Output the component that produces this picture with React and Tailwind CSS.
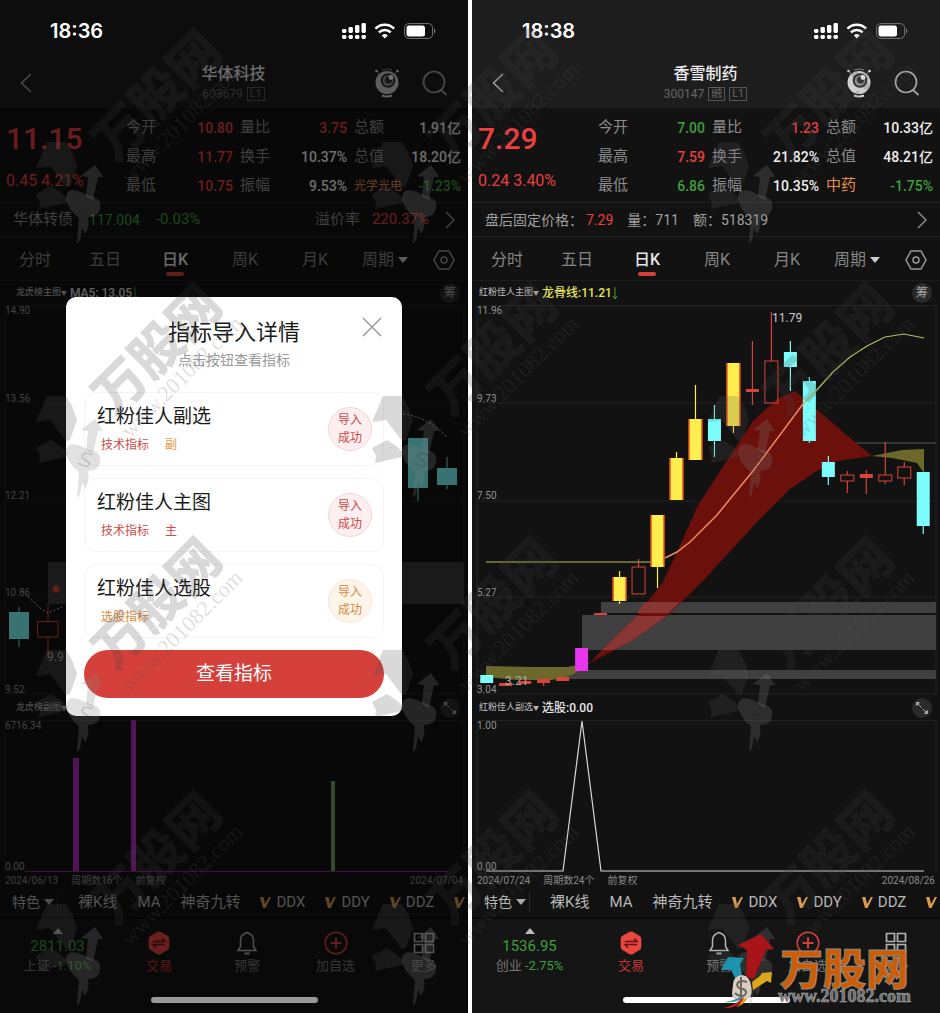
import React from "react";

const CANDLE_CYAN = "#7dfdfb";
const CANDLE_RED = "#d8433c";
const CANDLE_YELLOW = "#ffee4d";

const stockLeft = {
  time: "18:36",
  name: "华体科技",
  code: "603679",
  tags: ["L1"],
  price: "11.15",
  change: "0.45 4.21%",
  stats: [
    ["今开", "10.80", "text-[#e8403f]"],
    ["量比", "3.75", "text-[#e8403f]"],
    ["总额", "1.91亿", "text-[#f0f0f0]"],
    ["最高", "11.77", "text-[#e8403f]"],
    ["换手", "10.37%", "text-[#f0f0f0]"],
    ["总值", "18.20亿", "text-[#f0f0f0]"],
    ["最低", "10.75", "text-[#e8403f]"],
    ["振幅", "9.53%", "text-[#f0f0f0]"],
    ["光学光电", "-1.23%", "text-[#3f9f3d]", "text-xs text-[#e98d4a]"],
  ],
  mainName: "龙虎榜主图",
  mainValue: "MA5: 13.05",
  mainValueClass: "text-[#d8d8d8]",
  subName: "龙虎榜副图",
  subValue: "",
  from: "2024/06/13",
  period: "周期数16个",
  to: "2024/07/04",
  index: "2811.03",
  indexName: "上证",
  indexChange: "-1.10%",
};

const stockRight = {
  time: "18:38",
  name: "香雪制药",
  code: "300147",
  tags: ["融", "L1"],
  price: "7.29",
  change: "0.24 3.40%",
  stats: [
    ["今开", "7.00", "text-[#3f9f3d]"],
    ["量比", "1.23", "text-[#e8403f]"],
    ["总额", "10.33亿", "text-[#f0f0f0]"],
    ["最高", "7.59", "text-[#e8403f]"],
    ["换手", "21.82%", "text-[#f0f0f0]"],
    ["总值", "48.21亿", "text-[#f0f0f0]"],
    ["最低", "6.86", "text-[#3f9f3d]"],
    ["振幅", "10.35%", "text-[#f0f0f0]"],
    ["中药", "-1.75%", "text-[#3f9f3d]", "text-[15px] text-[#e98d4a]"],
  ],
  mainName: "红粉佳人主图",
  mainValue: "龙骨线:11.21",
  mainValueClass: "text-[#e3e45c]",
  subName: "红粉佳人副选",
  subValue: "选股:0.00",
  from: "2024/07/24",
  period: "周期数24个",
  to: "2024/08/26",
  index: "1536.95",
  indexName: "创业",
  indexChange: "-2.75%",
};

// type, body top, body bottom, wick top, wick bottom
const candles = [
  ["cyan", 370, 378],
  ["flat", 378, 381],
  ["flat", 376, 379],
  ["flat", 374, 378, 374, 381],
  ["flat", 372, 376],
  ["magenta", 343, 366],
  ["flat", 308, 310],
  ["yellow", 272, 296, 266, 299],
  ["hollow", 262, 289, 254, 262],
  ["yellow", 210, 262, 210, 283],
  ["yellow", 153, 195, 147, 195],
  ["yellow", 114, 155, 80, 155],
  ["cyan", 114, 136, 100, 152],
  ["yellow", 58, 121, 58, 128],
  ["flat", 84, 87, 36, 100],
  ["hollow", 56, 98, 7, 56],
  ["cyan", 47, 62, 36, 86],
  ["cyan", 76, 136, 72, 138],
  ["cyan", 157, 172, 151, 180],
  ["hollow", 170, 176, 166, 188],
  ["flat", 169, 173, 165, 189],
  ["hollow", 170, 176, 137, 179],
  ["hollow", 162, 173, 157, 180],
  ["cyan", 167, 221, 167, 229],
];

const StatusBar = ({ time }) => (
  <div className="relative z-20 flex h-[62px] items-center justify-between pl-[50px] pr-[32px] text-white">
    <span className="font-['Inter',sans-serif] text-xl font-semibold">{time}</span>
    <svg width="95" height="20" viewBox="0 0 95 20" fill="#fff" aria-hidden="true">
      {[0, 6.5, 13, 19.5].map((x, i) => (
        <g key={x}>
          <rect x={x + 1} y="14" width="4.4" height="4" rx="1.4" />
          <rect x={x + 1} y={8 - i * 2} width="4.4" height={4 + i * 2} rx="1.4" />
        </g>
      ))}
      <g fill="none" stroke="#fff" strokeWidth="2.7">
        <path d="M34.5 7.6a13.2 13.2 0 0 1 18.600 0" />
        <path d="M37.900 11.400a8.400 8.400 0 0 1 11.800 0" />
      </g>
      <path d="M43.800 17.600l-3-3.200a4.500 4.500 0 0 1 6 0z" />
      <rect x="63.600" y="2.600" width="28" height="14.800" rx="4.200" fill="none" stroke="#777" />
      <rect x="65.500" y="4.500" width="18.500" height="11" rx="2.500" />
      <path d="M93 7.500v5c1.800-.6 1.800-4.400 0-5z" fill="#777" />
    </svg>
  </div>
);

const EyeIcon = () => (
  <svg width="26" height="30" viewBox="0 0 26 30" aria-hidden="true">
    <path d="M3 3l3 4M23 3l-3 4M8 2q5-2 10 0" stroke="#888" fill="none" />
    <circle cx="2.500" cy="3" r="1.300" fill="#ddd" />
    <circle cx="23.500" cy="3" r="1.300" fill="#ddd" />
    <circle cx="13" cy="14.500" r="11.500" fill="#cfcfcf" />
    <circle cx="14" cy="12.500" r="7.300" fill="#303030" />
    <circle cx="14" cy="12.500" r="5.300" fill="#9a9a9a" />
    <circle cx="14.500" cy="12" r="3.600" fill="#333" />
    <circle cx="17" cy="9.500" r="2.400" fill="#fff" />
    <path d="M8 27.500q5 2 10 0" stroke="#ddd" strokeWidth="2" fill="none" />
  </svg>
);

const Header = ({ stock }) => (
  <header className="grid h-[46px] grid-cols-[1fr_auto_1fr] items-center pb-1 pl-[19px] pr-[20px]">
    <button aria-label="返回" className="w-5 text-[#a5a5a5]">
      <svg width="14" height="20" viewBox="0 0 14 20" fill="none" stroke="currentColor" strokeWidth="1.500">
        <path d="M12 1L2.500 10L12 19" />
      </svg>
    </button>
    <div className="flex flex-col items-center gap-[2px]">
      <h1 className="text-base leading-5 font-medium text-[#eee]">{stock.name}</h1>
      <div className="flex items-center gap-1 text-xs leading-4 text-[#666]">
        <span>{stock.code}</span>
        {stock.tags.map((tag) => (
          <span key={tag} className="border border-[#555] px-[2px] text-[11px] leading-3">
            {tag}
          </span>
        ))}
      </div>
    </div>
    <div className="flex items-center justify-end gap-[22px]">
      <button aria-label="助手">
        <EyeIcon />
      </button>
      <button aria-label="搜索" className="text-[#a5a5a5]">
        <svg width="26" height="26" viewBox="0 0 26 26" fill="none" stroke="currentColor" strokeWidth="1.700">
          <circle cx="12" cy="12" r="10.500" />
          <path d="M19 20l5.500 5" />
        </svg>
      </button>
    </div>
  </header>
);

const Stats = ({ stock }) => (
  <section className="flex h-[95px] items-start border-b border-[#222] pt-[5px] pr-[7px]">
    <div className="w-[126px] shrink-0 pl-[6px] text-[#e8403f]">
      <div className="pt-2 text-[30px] leading-9 font-medium">{stock.price}</div>
      <div className="pt-3 text-base leading-6 whitespace-nowrap">{stock.change}</div>
    </div>
    <dl className="grid flex-1 grid-cols-3 gap-x-[7px]">
      {stock.stats.map(([label, value, color, labelClass]) => (
        <div key={label} className="flex h-[29px] items-center justify-between">
          <dt className={labelClass || "text-[15px] text-[#8c8c8c]"}>{label}</dt>
          <dd className={"text-sm font-medium " + color}>{value}</dd>
        </div>
      ))}
    </dl>
  </section>
);

const Chevron = () => (
  <svg width="10" height="18" viewBox="0 0 10 18" fill="none" stroke="#8c8c8c" strokeWidth="1.500" aria-hidden="true">
    <path d="M1 1l8 8l-8 8" />
  </svg>
);

const BondRow = () => (
  <div className="flex h-[34px] items-center border-b border-[#222] pr-[13px] pl-[13px] text-[15px] text-[#8c8c8c]">
    <span>华体转债</span>
    <span className="pl-4 text-sm text-[#3f9f3d]">117.004</span>
    <span className="pl-4 text-[#3f9f3d]">-0.03%</span>
    <span className="ml-auto">溢价率</span>
    <span className="pr-4 pl-3 text-[#e8403f]">220.37%</span>
    <Chevron />
  </div>
);

const AfterHoursRow = () => (
  <div className="flex h-[34px] items-center border-b border-[#222] pr-[13px] pl-[13px] text-sm text-[#a0a0a0]">
    <span>盘后固定价格：</span>
    <span className="pr-[14px] pl-[3px] text-[#e8403f]">7.29</span>
    <span>量：</span>
    <span className="pr-[14px]">711</span>
    <span>额：</span>
    <span className="mr-auto">518319</span>
    <Chevron />
  </div>
);

const Tabs = () => (
  <nav className="flex h-[44px] items-center border-b border-[#1c1c1c] pt-[2px] text-base text-[#858585]">
    {["分时", "五日", "日K", "周K", "月K"].map((tab) => (
      <button key={tab} className={"relative flex-1 " + (tab === "日K" ? "font-medium text-[#e6e6e6]" : "")}>
        {tab}
        {tab === "日K" && (
          <span className="absolute -bottom-1 left-1/2 h-1 w-[18px] -translate-x-1/2 rounded-full bg-[#d6403a]"></span>
        )}
      </button>
    ))}
    <button className="flex flex-1 items-center justify-center gap-1">
      周期
      <svg width="10" height="6" viewBox="0 0 10 6" fill="#ccc" aria-hidden="true">
        <path d="M0 0h10l-5 6z" />
      </svg>
    </button>
    <button aria-label="设置" className="flex w-12 justify-center">
      <svg width="22" height="22" viewBox="0 0 22 22" fill="none" stroke="#9a9a9a" strokeWidth="1.500">
        <path d="M6 2h10l5 9l-5 9h-10l-5-9z" />
        <circle cx="11" cy="11" r="3" />
      </svg>
    </button>
  </nav>
);

const PaneHead = ({ name, value, valueClass, arrow, children }) => (
  <div className="flex h-6 items-center pr-[8px] pl-[7px]">
    <button className="flex min-w-[60px] items-center justify-end text-[9px] text-[#c5c5c5]">
      {name}
      <svg width="6" height="5" viewBox="0 0 6 5" fill="#b5b5b5" aria-hidden="true">
        <path d="M0 0h6l-3 5z" />
      </svg>
    </button>
    <span className={"pl-[3px] text-xs font-medium " + valueClass}>{value}</span>
    {arrow && (
      <svg width="6" height="13" viewBox="0 0 6 13" fill="none" stroke="#3f9f3d" aria-hidden="true">
        <path d="M3 0v12M1 9l2 3l2-3" />
      </svg>
    )}
    <button className="ml-auto flex size-5 items-center justify-center rounded-full bg-[#2a2a2a] text-xs text-[#a5a5a5]">
      {children}
    </button>
  </div>
);

const Expand = () => (
  <svg width="14" height="14" viewBox="0 0 14 14" stroke="#a5a5a5" fill="#a5a5a5" aria-hidden="true">
    <path d="M1.500 1.500h3l-3 3zM12.500 12.500h-3l3-3z" />
    <path d="M2 2l4.500 4.500M8 8l4 4" />
  </svg>
);

const Grid = ({ labels }) => (
  <>
    <g stroke="#222">
      {[0.5, 98, 196, 292, 389].map((y) => (
        <path key={y} d={`M5 ${y}H464`} />
      ))}
      <path d="M5 0V389M464 0V389" />
    </g>
    <g fontSize="10" fill="#929292">
      {labels.map((label, i) => (
        <text key={label} x="5" y={[9, 97, 194, 291, 388][i]}>
          {label}
        </text>
      ))}
    </g>
  </>
);

const Candle = ({ x, type, top, bottom, wickTop, wickBottom }) => {
  const colors = { cyan: CANDLE_CYAN, yellow: CANDLE_YELLOW, magenta: "#ea35ee" };
  const color = colors[type] || CANDLE_RED;
  const hollow = type === "hollow";
  return (
    <g>
      {wickTop !== undefined && (
        <path
          d={hollow ? `M${x} ${wickTop}V${top}M${x} ${bottom}V${Math.max(bottom, wickBottom)}` : `M${x} ${wickTop}V${wickBottom}`}
          stroke={color}
          strokeWidth="1.200"
        />
      )}
      <rect
        x={x - 6.5}
        y={top}
        width="13"
        height={bottom - top}
        fill={hollow ? "none" : color}
        stroke={hollow ? CANDLE_RED : "none"}
      />
      {type === "yellow" && (
        <path d={`M${x - 6.5} ${top}V${bottom}M${x + 6.5} ${top}V${bottom}`} stroke="#e8521e" strokeWidth="1.500" />
      )}
    </g>
  );
};

const MainChartRight = () => (
  <svg viewBox="0 0 468 391" className="block w-full" role="img" aria-label="日K线图">
    <Grid labels={["11.96", "9.73", "7.50", "5.27", "3.04"]} />
    <g fill="#404040">
      <rect x="129" y="297" width="335" height="11" />
      <rect x="110" y="310" width="354" height="35" />
      <rect x="92" y="365" width="372" height="9" />
    </g>
    <path d="M338 138H464" stroke="#555" />
    <path
      d="M118 358L141 334L165 311L191 277L211 234L225 202L243 174L281 116L305 94L323 86L341 101L371 127L400 151L365 156L345 166L318 184L285 217L231 276L195 311L158 337Z"
      fill="#6b100a"
    />
    <path d="M118 358L141 334L165 311H195L158 337L142 345H131Z" fill="#8a3634" />
    <path d="M165 308L173 297H208L197 308Z" fill="#8a3634" />
    <g fill="#6a692a">
      <path d="M14 361L60 362L95 362L118 358L100 370L80 375L45 375L14 372Z" />
      <path d="M400 151L430 145L452 144V168L445 158L420 153Z" />
    </g>
    {candles.map(([type, top, bottom, wickTop, wickBottom], i) => (
      <Candle
        key={i}
        x={14.7 + i * 18.98}
        type={type}
        top={top}
        bottom={bottom}
        wickTop={wickTop}
        wickBottom={wickBottom}
      />
    ))}
    <path d="M14 257H179" stroke="#83843f" strokeWidth="1.500" />
    <path d="M193 253L205 247L218 237L231 224L245 210L258 194L281 166L331 99" stroke="#f08a5d" strokeWidth="1.500" fill="none" />
    <path d="M331 99L343 87L361 67L378 52L395 41L413 32L432 29L452 33" stroke="#b9bb66" strokeWidth="1.200" fill="none" />
    <text x="300" y="17" fontSize="12" fill="#ccc">11.79</text>
    <text x="33" y="380" fontSize="12" fill="#aaa">3.21</text>
  </svg>
);

const MainChartLeft = () => (
  <svg viewBox="0 0 468 391" className="block w-full" role="img" aria-label="日K线图">
    <Grid labels={["14.90", "13.56", "12.21", "10.86", "9.52"]} />
    <rect x="48" y="257" width="416" height="42" fill="#3a3a3a" />
    <g fill={CANDLE_CYAN} stroke={CANDLE_CYAN}>
      <path d="M19 302V342M418 183V196M447 152V184" />
      <rect x="9.500" y="307.500" width="19" height="26" />
      <rect x="408.500" y="133.500" width="19" height="49" />
      <rect x="437.500" y="163.500" width="19" height="16" />
    </g>
    <path d="M48 299V316M48 332V354M37.500 316.500H58V332H37.500Z" fill="none" stroke={CANDLE_RED} />
    <circle cx="56" cy="284" r="3.500" fill={CANDLE_RED} />
    <path d="M22 286L40 303L48 308L62 302M403 109Q428 112 448 133" fill="none" stroke="#ccc" strokeDasharray="2 2" />
    <text x="47" y="356" fontSize="12" fill="#aaa">9.9</text>
  </svg>
);

const SubChart = ({ top, label, children }) => (
  <svg viewBox="0 0 468 153" className="block w-full" role="img" aria-label={label}>
    <path d="M5 151V.5H464V151" stroke="#222" fill="none" />
    <text x="5" y="9" fontSize="10" fill="#929292">{top}</text>
    <text x="5" y="150" fontSize="10" fill="#929292">0.00</text>
    {children}
  </svg>
);

const VipMark = () => (
  <svg width="11" height="11" viewBox="0 0 11 11" aria-hidden="true">
    <path d="M0 0h3.500l1.500 7L9 0h2L5.500 11H3z" fill="#d99a4e" />
  </svg>
);

const Features = () => (
  <nav className="flex h-[30px] items-center gap-5 overflow-hidden pl-3 text-[15px] whitespace-nowrap text-[#b8b8b8]">
    <button className="flex items-center gap-1 border-r border-[#2a2a2a] pr-[3px] text-sm">
      特色
      <svg width="10" height="6" viewBox="0 0 10 6" fill="#aaa" aria-hidden="true">
        <path d="M0 0h10l-5 6z" />
      </svg>
    </button>
    <button>裸K线</button>
    <button>MA</button>
    <button>神奇九转</button>
    {["DDX", "DDY", "DDZ"].map((item) => (
      <button key={item} className="flex items-center gap-[5px]">
        <VipMark />
        {item}
      </button>
    ))}
    <button aria-label="更多指标" className="shrink-0">
      <VipMark />
    </button>
  </nav>
);

const BottomNav = ({ stock }) => (
  <nav className="flex h-[55px] items-end text-[13px] leading-4 text-[#777]">
    <button className="flex w-[115px] flex-col items-center">
      <svg width="10" height="6" viewBox="0 0 10 6" fill="#bbb" aria-hidden="true">
        <path d="M0 6h10l-5-6z" />
      </svg>
      <span className="pt-[2px] text-[15px] leading-5 text-[#3f9f3d]">{stock.index}</span>
      <span className="pt-[2px]">
        {stock.indexName} <span className="text-[#3f9f3d]">{stock.indexChange}</span>
      </span>
    </button>
    <button className="flex flex-1 flex-col items-center gap-[3px] text-[#c93632]">
      <svg width="24" height="24" viewBox="0 0 24 24" aria-hidden="true">
        <path d="M10 1q2-1 4 0l6.500 3.700q1.800 1.100 1.800 3v8.400q0 2-1.800 3L14 23q-2 1-4 0l-6.500-3.900q-1.800-1-1.800-3V7.700q0-1.900 1.800-3z" fill="#ea4640" />
        <path d="M6 10.500h12l-3-3M18 13.500H6l3 3" stroke="#5c1412" strokeWidth="1.500" fill="none" />
      </svg>
      交易
    </button>
    <button className="flex flex-1 flex-col items-center gap-[3px]">
      <svg width="24" height="24" viewBox="0 0 24 24" fill="none" stroke="#b5b5b5" strokeWidth="1.500" aria-hidden="true">
        <path d="M3 19.500h18l-2.500-4V10c0-5-2.500-7-5-7.800q-1.500-1.500-3 0C8 3 5.500 5 5.500 10v5.500z" />
        <path d="M9.500 22.500h5" strokeWidth="2" />
      </svg>
      预警
    </button>
    <button className="flex flex-1 flex-col items-center gap-[3px]">
      <svg width="24" height="24" viewBox="0 0 24 24" fill="none" stroke="#d6403a" strokeWidth="1.500" aria-hidden="true">
        <circle cx="12" cy="12" r="10.800" />
        <path d="M12 6.500v11M6.500 12h11" strokeWidth="2" />
      </svg>
      加自选
    </button>
    <button className="flex flex-1 flex-col items-center gap-[3px]">
      <svg width="24" height="24" viewBox="0 0 24 24" fill="none" stroke="#b5b5b5" strokeWidth="1.700" aria-hidden="true">
        <path d="M2.500 2.500h8v8h-8zM13.500 2.500h8v8h-8zM2.500 13.500h8v8h-8zM13.500 13.500h8v8h-8z" />
      </svg>
      更多
    </button>
  </nav>
);

const Phone = ({ stock, row, mainChart, subChart, homeClass, children }) => (
  <main className="relative flex-1 overflow-hidden bg-[#121212]">
    <div className="bg-[#1d1d1d]">
      <StatusBar time={stock.time} />
      <Header stock={stock} />
    </div>
    <Stats stock={stock} />
    {row}
    <Tabs />
    <PaneHead name={stock.mainName} value={stock.mainValue} valueClass={stock.mainValueClass} arrow>
      筹
    </PaneHead>
    {mainChart}
    <PaneHead name={stock.subName} value={stock.subValue} valueClass="text-[#e6e6e6]">
      <Expand />
    </PaneHead>
    {subChart}
    <div className="flex h-[14px] items-center gap-[13px] px-[5px] text-[10px] text-[#8a8a8a]">
      <span>{stock.from}</span>
      <span>{stock.period}</span>
      <span>前复权</span>
      <span className="ml-auto">{stock.to}</span>
    </div>
    <Features />
    <div className="border-t-2 border-[#080808] bg-[#151515] pb-[39px]">
      <BottomNav stock={stock} />
    </div>
    <div className="absolute inset-x-0 bottom-[10px] z-20 flex justify-center">
      <div className={"h-[6px] w-[167px] rounded-full " + homeClass}></div>
    </div>
    {children}
  </main>
);

const imports = [
  { name: "红粉佳人副选", tags: [["技术指标", "text-[#cf4a48]"], ["副", "text-[#e39a4c]"]], orange: false },
  { name: "红粉佳人主图", tags: [["技术指标", "text-[#cf4a48]"], ["主", "text-[#cf4a48]"]], orange: false },
  { name: "红粉佳人选股", tags: [["选股指标", "text-[#d98a3c]"]], orange: true },
];

const ImportDialog = () => (
  <div className="absolute inset-0 z-10 flex items-center bg-black/55">
    <div role="dialog" aria-labelledby="import-title" className="relative mx-[66px] w-full rounded-[10px] bg-white px-[18px] pt-5 pb-[18px]">
      <button aria-label="关闭" className="absolute top-5 right-5">
        <svg width="20" height="20" viewBox="0 0 20 20" stroke="#999" strokeWidth="1.500">
          <path d="M1 1l18 18M19 1L1 19" />
        </svg>
      </button>
      <h2 id="import-title" className="text-center text-[22px] leading-8 text-[#1a1a1a]">
        指标导入详情
      </h2>
      <p className="text-center text-sm leading-[22px] text-[#999]">点击按钮查看指标</p>
      <ul className="space-y-3 pt-[21px] pb-3">
        {imports.map((item) => (
          <li key={item.name} className="flex h-[74px] items-center justify-between rounded-xl border border-[#f4f4f4] pr-[11px] pl-3">
            <div>
              <h3 className="text-[19px] leading-7 text-[#1a1a1a]">{item.name}</h3>
              <p className="flex gap-4 pt-1 pl-1 text-xs leading-5">
                {item.tags.map(([text, color]) => (
                  <span key={text} className={color}>
                    {text}
                  </span>
                ))}
              </p>
            </div>
            <button
              className={
                "size-11 rounded-full border text-xs leading-[18px] " +
                (item.orange
                  ? "border-[#f9e6d2] bg-[#fef5ea] text-[#d98a3c]"
                  : "border-[#f6d5d7] bg-[#fdeeef] text-[#cf4a48]")
              }
            >
              导入
              <br />
              成功
            </button>
          </li>
        ))}
      </ul>
      <button className="h-12 w-full rounded-full bg-[#d6403a] text-[19px] text-white">查看指标</button>
    </div>
  </div>
);

const Watermark = () => (
  <svg className="pointer-events-none absolute inset-0 z-30 size-full" aria-hidden="true">
    <defs>
      <pattern id="mark" width="336" height="254" patternUnits="userSpaceOnUse">
        <text transform="translate(115 164) rotate(-45)" fontSize="52" fontWeight="900" fill="#404040" fillOpacity=".2">
          万股网
        </text>
        <text
          transform="translate(130 185) rotate(-45)"
          fontSize="22"
          fontFamily="Liberation Serif, serif"
          fill="#505050"
          fillOpacity=".18"
        >
          www.201082.com
        </text>
        <g fill="#505050" fillOpacity=".22">
          <path d="M47 142L66 142L72 152L77 166L70 186L66 187L50 166L36 168Z" />
          <path d="M36 194L51 186L60 192L68 199L66 203L39 209L40 202Z" />
        </g>
        <g fill="#808080" fillOpacity=".24">
          <path d="M81 176L95 165L103 177L98 177L93 200L86 196L88 177Z" />
          <path d="M66 196Q68 188 78 191L90 196Q102 198 100 208Q99 217 88 217Q90 226 85 234L82 228L80 240L77 244L79 218Q66 208 66 196Z" />
        </g>
        <path
          d="M92 201Q84 197 82 202Q82 205 87 207Q91 209 88 212Q84 213 78 209"
          stroke="#222"
          strokeOpacity=".18"
          strokeWidth="1.500"
          fill="none"
        />
      </pattern>
    </defs>
    <rect width="100%" height="100%" fill="url(#mark)" />
  </svg>
);

const SiteLogo = () => (
  <svg
    width="196"
    height="76"
    viewBox="0 0 196 76"
    className="pointer-events-none absolute right-[24px] bottom-1 z-40"
    role="img"
    aria-label="万股网 www.201082.com"
  >
    <path d="M18 12L41 1L54 16L46 17L34 46L26 44L27 17Z" fill="#a8141a" stroke="#5b2020" strokeWidth=".7" />
    <path d="M1 37L8 24L24 25L20 31L22 42L15 45L11 37Z" fill="#1d93ae" />
    <path d="M32 49L40 43L42 40L52 39L51 50L47 48L33 57Z" fill="#dba51d" />
    <path d="M13 52Q13 43 22 42Q30 43 31 53Q34 66 23 68Q12 69 12 60Z" fill="#d8cfc2" />
    <path d="M27 49Q18 46 17 52Q18 56 23 56Q28 58 25 62Q20 65 15 60M21 44V67" stroke="#6d655b" strokeWidth="2" fill="none" />
    <path d="M3 75Q14 73 24 64L23 68Q15 76 3 75Z" fill="#c51d1d" />
    <path d="M5 69Q14 68 22 63L20 67Q12 70 5 69Z" fill="#2b94ad" />
    <path d="M16 74Q23 70 23 65L27 66Q25 71 16 74Z" fill="#e0a41b" />
    <text x="60" y="52" fontSize="43" fontWeight="900" fill="#cb5d08" stroke="#9b8a7a" strokeWidth="1">
      万股网
    </text>
    <text x="58" y="69" fontSize="18" fontWeight="700" fontFamily="Liberation Serif, serif" fill="#6f6f6f" stroke="#a5a5a5" strokeWidth=".6">
      www.201082.com
    </text>
  </svg>
);

export default function App() {
  return (
    <div className="relative flex gap-1 overflow-hidden bg-white font-['Roboto','Noto_Sans_CJK_SC',sans-serif]">
      <Phone
        stock={stockLeft}
        row={<BondRow />}
        mainChart={<MainChartLeft />}
        subChart={
          <SubChart top="6716.34" label="龙虎榜副图">
            <path d="M25 151.500H448" stroke="#7d2a80" />
            <path d="M73 38h6v113h-6zM131 0h5v151h-5z" fill="#b82cc0" />
            <path d="M331 61h4v90h-4z" fill="#6fa858" />
          </SubChart>
        }
        homeClass="bg-[#999]"
      >
        <ImportDialog />
      </Phone>
      <Phone
        stock={stockRight}
        row={<AfterHoursRow />}
        mainChart={<MainChartRight />}
        subChart={
          <SubChart top="1.00" label="选股">
            <path d="M14 151H91L110 1L129 151H452" stroke="#d8d8d8" strokeWidth="1.200" fill="none" />
          </SubChart>
        }
        homeClass="bg-white"
      />
      <Watermark />
      <SiteLogo />
    </div>
  );
}
